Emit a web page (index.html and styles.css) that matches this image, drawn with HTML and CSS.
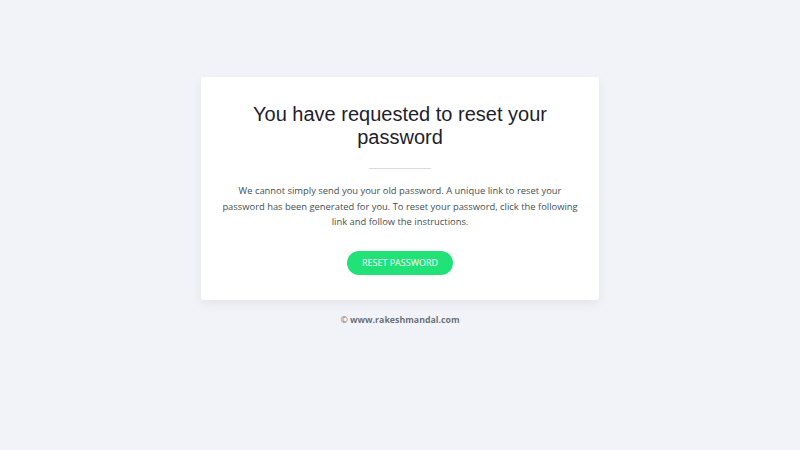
FILE: index.html
```html
<!DOCTYPE html>
<html>
<head>
<meta charset="utf-8">
<link rel="stylesheet" href="styles.css">
</head>
<body>
<div class="page">
  <div class="card">
    <h1 class="title">You have requested to reset your password</h1>
    <span class="divider"></span>
    <p class="text">We cannot simply send you your old password. A unique link to reset your password has been generated for you. To reset your password, click the following link and follow the instructions.</p>
    <a class="btn" href="#">Reset Password</a>
  </div>
  <p class="footer">&copy; <strong>www.rakeshmandal.com</strong></p>
</div>
</body>
</html>
```
FILE: styles.css
```css
html, body {
  margin: 0;
  padding: 0;
  background: #f2f3f8;
}
.page {
  display: flex;
  flex-direction: column;
  align-items: center;
  padding-top: 77px;
}
.card {
  width: 398px;
  box-sizing: border-box;
  background: #fff;
  border-radius: 2px;
  box-shadow: 0 4px 11px 0 rgba(0,0,0,0.06);
  padding: 26px 20px 25px;
  display: flex;
  flex-direction: column;
  align-items: center;
  text-align: center;
}
.title {
  margin: 0;
  font-family: "Liberation Sans", Arial, sans-serif;
  font-weight: 400;
  font-size: 20px;
  line-height: 23px;
  color: #1e1e2d;
  width: 320px;
}
.divider {
  display: block;
  width: 62px;
  border-bottom: 1px solid #dcdcdc;
  margin: 19px 0 14px;
}
.text {
  margin: 0;
  font-family: "Open Sans", sans-serif;
  font-size: 9.4px;
  line-height: 15.5px;
  color: #455056;
}
.btn {
  display: inline-block;
  margin-top: 21px;
  background: #20e277;
  color: #fff;
  text-decoration: none;
  text-transform: uppercase;
  font-family: "Open Sans", sans-serif;
  font-size: 9px;
  line-height: 12px;
  padding: 6px 14.5px;
  border-radius: 30px;
}
.footer {
  margin: 14px 0 0;
  font-family: "Open Sans", sans-serif;
  font-size: 8.8px;
  line-height: 12px;
  color: rgba(69,80,86,0.8);
}
.footer strong { font-weight: 700; }
```
